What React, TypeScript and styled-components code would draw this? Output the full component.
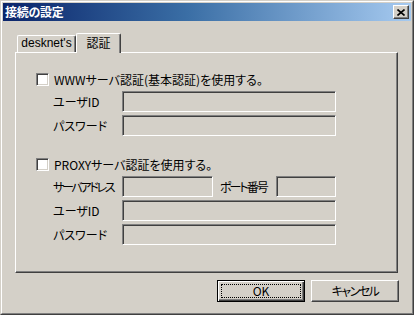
import React from 'react';
import styled, { createGlobalStyle } from 'styled-components';

const Global = createGlobalStyle`
  html, body { margin: 0; padding: 0; background: #D4D0C8; }
  body {
    width: 414px; height: 315px; overflow: hidden;
    font-family: "Noto Sans CJK JP", "Liberation Sans", sans-serif;
    font-size: 12px; color: #000;
    font-feature-settings: "palt";
  }
`;

const Window = styled.div`
  box-sizing: border-box;
  width: 414px;
  height: 315px;
  background: #D4D0C8;
  border: 1px solid;
  border-color: #D4D0C8 #404040 #404040 #D4D0C8;
  display: flex;
`;

const Frame = styled.div`
  flex: 1;
  display: flex;
  flex-direction: column;
  border: 1px solid;
  border-color: #FFFFFF #808080 #808080 #FFFFFF;
  padding: 1px;
`;

const TitleBar = styled.div`
  height: 18px;
  flex: none;
  display: flex;
  align-items: center;
  justify-content: space-between;
  padding: 0 2px 0 2px;
  background: linear-gradient(to right, #0A246A 0%, #3A6EA5 45%, #A6CAF0 100%);
`;

const Title = styled.span`
  color: #FFFFFF;
  font-weight: bold;
  font-size: 12px;
  line-height: 18px;
  font-feature-settings: normal;
  letter-spacing: -0.3px;
`;

const RaisedButton = styled.button`
  box-sizing: border-box;
  margin: 0;
  padding: 0;
  background: #D4D0C8;
  border: 1px solid;
  border-color: #FFFFFF #404040 #404040 #FFFFFF;
  box-shadow: inset -1px -1px 0 #808080;
  font: inherit;
  font-feature-settings: "palt";
  color: #000;
  display: flex;
  align-items: center;
  justify-content: center;
`;

const CloseButton = styled(RaisedButton)`
  width: 16px;
  height: 14px;
`;

const Body = styled.div`
  flex: 1;
  display: flex;
  flex-direction: column;
  padding: 12px 13px 10px 12px;
`;

const TabStrip = styled.div`
  height: 19px;
  flex: none;
  display: flex;
  align-items: flex-end;
  padding-left: 2px;
  position: relative;
  z-index: 1;
`;

const Tab = styled.div<{ $active?: boolean }>`
  box-sizing: border-box;
  width: ${p => (p.$active ? 45 : 59)}px;
  height: ${p => (p.$active ? 20 : 17)}px;
  margin-bottom: ${p => (p.$active ? -1 : 0)}px;
  background: #D4D0C8;
  border-top: 1px solid #FFFFFF;
  border-left: 1px solid #FFFFFF;
  border-right: 1px solid #404040;
  box-shadow: inset -1px 0 0 #808080;
  border-radius: 2px 2px 0 0;
  display: flex;
  justify-content: center;
  padding-top: ${p => (p.$active ? 1 : 0)}px;
  font-size: 12px;
  font-family: ${p => (p.$active ? '"Noto Sans CJK JP", sans-serif' : '"Liberation Sans", sans-serif')};
  line-height: 15px;
`;

const Panel = styled.div`
  box-sizing: border-box;
  height: 221px;
  flex: none;
  border: 1px solid;
  border-color: #FFFFFF #404040 #404040 #FFFFFF;
  box-shadow: inset -1px -1px 0 #808080;
  padding: 20px 0 0 20px;
  display: flex;
  flex-direction: column;
`;

const Section = styled.div<{ $gapTop?: number }>`
  display: flex;
  flex-direction: column;
  gap: 3px;
  margin-top: ${p => p.$gapTop ?? 0}px;
`;

const CheckRow = styled.label`
  display: flex;
  align-items: center;
  gap: 5px;
  height: 13px;
  margin-bottom: 2px;
  line-height: 13px;
  white-space: nowrap;
`;

const CheckBox = styled.span`
  box-sizing: border-box;
  width: 13px;
  height: 13px;
  flex: none;
  background: #FFFFFF;
  border: 1px solid;
  border-color: #808080 #FFFFFF #FFFFFF #808080;
  box-shadow: inset 1px 1px 0 #404040, inset -1px -1px 0 #D4D0C8;
`;

const FieldRow = styled.div`
  display: flex;
  align-items: center;
  height: 21px;
  padding-left: 17px;
`;

const Label = styled.span<{ $w: number; $indent?: number; $tight?: number }>`
  box-sizing: border-box;
  width: ${p => p.$w}px;
  padding-left: ${p => p.$indent ?? 0}px;
  letter-spacing: ${p => p.$tight ?? 0}px;
  flex: none;
  white-space: nowrap;
  overflow: hidden;
  font-size: 12px;
`;

const Input = styled.div<{ $w: number }>`
  box-sizing: border-box;
  width: ${p => p.$w}px;
  height: 21px;
  flex: none;
  background: #D4D0C8;
  border: 1px solid;
  border-color: #808080 #FFFFFF #FFFFFF #808080;
  box-shadow: inset 1px 1px 0 #404040, inset -1px -1px 0 #D4D0C8;
`;

const ButtonRow = styled.div`
  margin-top: 7px;
  display: flex;
  justify-content: flex-end;
  gap: 6px;
  margin-right: -1px;
`;

const DialogButton = styled(RaisedButton)<{ $default?: boolean }>`
  width: 88px;
  height: 22px;
  padding: 3px;
  font-size: 12px;
  ${p =>
    p.$default
      ? `border: 1px solid #000; box-shadow: inset 1px 1px 0 #FFFFFF, inset -1px -1px 0 #404040, inset -2px -2px 0 #808080;`
      : ''}
`;

const FocusRect = styled.span<{ $show?: boolean; $tight?: number }>`
  box-sizing: border-box;
  flex: 1;
  align-self: stretch;
  display: flex;
  align-items: center;
  justify-content: center;
  border: 1px dotted ${p => (p.$show ? '#000' : 'transparent')};
  letter-spacing: ${p => p.$tight ?? 0}px;
  line-height: 12px;
`;

const CloseIcon = () => (
  <svg width="8" height="7" viewBox="0 0 8 7" style={{ display: 'block' }}>
    <path d="M0.5 0.5 L7.5 6.5 M7.5 0.5 L0.5 6.5" stroke="#000" strokeWidth="1.6" fill="none" />
  </svg>
);

export default function App() {
  return (
    <>
      <Global />
      <Window>
        <Frame>
          <TitleBar>
            <Title>接続の設定</Title>
            <CloseButton aria-label="閉じる">
              <CloseIcon />
            </CloseButton>
          </TitleBar>
          <Body>
            <TabStrip>
              <Tab>desknet's</Tab>
              <Tab $active>認証</Tab>
            </TabStrip>
            <Panel>
              <Section>
                <CheckRow>
                  <CheckBox />
                  WWWサーバ認証(基本認証)を使用する。
                </CheckRow>
                <FieldRow>
                  <Label $w={69}>ユーザID</Label>
                  <Input $w={214} />
                </FieldRow>
                <FieldRow>
                  <Label $w={69}>パスワード</Label>
                  <Input $w={214} />
                </FieldRow>
              </Section>
              <Section $gapTop={22}>
                <CheckRow>
                  <CheckBox />
                  PROXYサーバ認証を使用する。
                </CheckRow>
                <FieldRow>
                  <Label $w={69} $tight={-2.3}>サーバアドレス</Label>
                  <Input $w={91} />
                  <Label $w={63} $indent={7} $tight={-2}>ポート番号</Label>
                  <Input $w={60} />
                </FieldRow>
                <FieldRow>
                  <Label $w={69}>ユーザID</Label>
                  <Input $w={214} />
                </FieldRow>
                <FieldRow>
                  <Label $w={69}>パスワード</Label>
                  <Input $w={214} />
                </FieldRow>
              </Section>
            </Panel>
            <ButtonRow>
              <DialogButton $default>
                <FocusRect $show>OK</FocusRect>
              </DialogButton>
              <DialogButton>
                <FocusRect $tight={-1.5}>キャンセル</FocusRect>
              </DialogButton>
            </ButtonRow>
          </Body>
        </Frame>
      </Window>
    </>
  );
}
